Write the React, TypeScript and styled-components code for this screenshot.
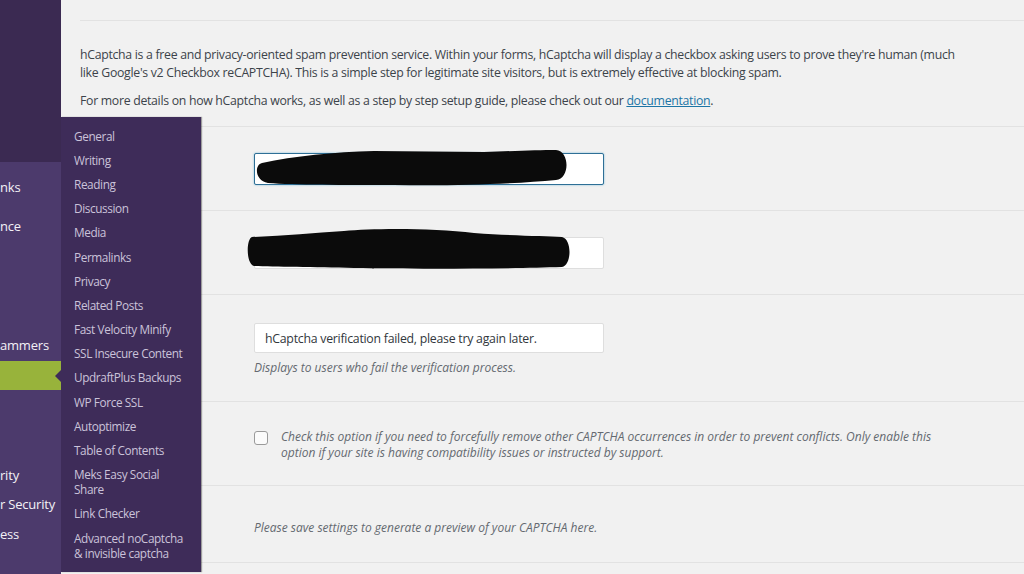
import styled, { createGlobalStyle } from "styled-components";

const GlobalStyle = createGlobalStyle`
  body {
    margin: 0;
    background: #f1f1f1;
    font-family: "Open Sans", "Noto Sans", sans-serif;
    color: #3c434a;
  }
`;

const Page = styled.div`
  position: relative;
  display: flex;
  height: 574px;
  overflow: hidden;
`;

const AdminMenu = styled.nav`
  width: 61px;
  flex-shrink: 0;
  display: flex;
  flex-direction: column;
  overflow: hidden;
`;

const MenuTop = styled.div`
  height: 162px;
  background: #3b2a52;
`;

const MenuBody = styled.div`
  flex: 1;
  background: #4c3a6c;
  display: flex;
  flex-direction: column;
`;

const MenuItem = styled.div<{ $gap: number; $h: number; $current?: boolean }>`
  margin-top: ${(p) => p.$gap}px;
  height: ${(p) => p.$h}px;
  display: flex;
  align-items: center;
  position: relative;
  white-space: nowrap;
  font-size: 13px;
  letter-spacing: -0.2px;
  color: #f3f1f6;
  background: ${(p) => (p.$current ? "#98b33b" : "transparent")};
`;

const Notch = styled.span`
  position: absolute;
  right: 0;
  top: 50%;
  margin-top: -6px;
  border-style: solid;
  border-width: 6px 6px 6px 0;
  border-color: transparent #3e2c59 transparent transparent;
`;

const Flyout = styled.ul`
  position: absolute;
  left: 61px;
  top: 117px;
  width: 140px;
  margin: 0;
  padding: 7px 0 7px;
  list-style: none;
  background: #3e2c59;
  box-shadow: 1px 0 1px rgba(0, 0, 0, 0.35);
`;

const FlyoutItem = styled.li`
  padding: 4.6px 14px 4.6px 13px;
  font-size: 11.8px;
  letter-spacing: -0.4px;
  line-height: 15px;
  color: #cbc3da;
`;

const Content = styled.main`
  flex: 1;
  padding-left: 19px;
`;

const Intro = styled.section`
  margin-top: 20px;
  border-top: 1px solid #e2e2e2;
  border-bottom: 1px solid #e2e2e2;
  padding: 25px 60px 16px 0;
`;

const Para = styled.p<{ $space?: number }>`
  margin: ${(p) => p.$space ?? 0}px 0 0;
  font-size: 12.3px;
  letter-spacing: -0.3px;
  line-height: 18px;
`;

const DocLink = styled.a`
  color: #1c75a6;
  text-decoration: underline;
`;

const FormRow = styled.div<{ $pad: string }>`
  padding: ${(p) => p.$pad};
  padding-left: 174px;
  border-bottom: 1px solid #e2e2e2;
`;

const FieldWrap = styled.div`
  position: relative;
  width: 350px;
`;

const TextInput = styled.input<{ $focused?: boolean; $h: number }>`
  display: block;
  box-sizing: border-box;
  width: 350px;
  height: ${(p) => p.$h}px;
  padding: 0 10px;
  margin: 0;
  font-family: inherit;
  font-size: 12.3px;
  letter-spacing: -0.25px;
  color: #32373c;
  background: #fff;
  border-radius: 2px;
  border: 1px solid ${(p) => (p.$focused ? "#2e6f96" : "#dedede")};
  box-shadow: ${(p) => (p.$focused ? "0 0 2px rgba(30, 140, 190, 0.6)" : "none")};
  outline: none;
`;

const Redaction = styled.svg`
  position: absolute;
  left: 0;
  top: 0;
  overflow: visible;
`;

const Description = styled.p`
  margin: 6px 0 0;
  font-size: 12px;
  font-style: italic;
  line-height: 18px;
  color: #646970;
`;

const CheckLine = styled.label`
  display: flex;
  align-items: flex-start;
  gap: 13px;
  padding-right: 85px;
`;

const Checkbox = styled.span`
  flex-shrink: 0;
  width: 14px;
  height: 14px;
  margin-top: 2px;
  box-sizing: border-box;
  border: 1px solid #9a9a9a;
  border-radius: 3px;
  background: #fbfbfb;
`;

const CheckText = styled.span`
  font-size: 12px;
  font-style: italic;
  line-height: 15.5px;
  color: #646970;
`;

const Note = styled.p`
  margin: 0;
  font-size: 12px;
  font-style: italic;
  line-height: 18px;
  color: #646970;
`;

const menuItems = [
  { label: "nks", gap: 10, h: 30 },
  { label: "nce", gap: 9, h: 30 },
  { label: "ammers", gap: 89, h: 30 },
  { label: "", gap: 1, h: 29, current: true },
  { label: "rity", gap: 70, h: 29 },
  { label: "r Security", gap: 0, h: 29 },
  { label: "ess", gap: 1, h: 29 },
];

const settingsPages = [
  "General",
  "Writing",
  "Reading",
  "Discussion",
  "Media",
  "Permalinks",
  "Privacy",
  "Related Posts",
  "Fast Velocity Minify",
  "SSL Insecure Content",
  "UpdraftPlus Backups",
  "WP Force SSL",
  "Autoptimize",
  "Table of Contents",
  "Meks Easy Social Share",
  "Link Checker",
  "Advanced noCaptcha & invisible captcha",
];

const App = () => {
  return (
    <Page>
      <GlobalStyle />
      <AdminMenu>
        <MenuTop />
        <MenuBody>
          {menuItems.map((m, i) => (
            <MenuItem key={i} $gap={m.gap} $h={m.h} $current={m.current}>
              {m.label}
              {m.current && <Notch />}
            </MenuItem>
          ))}
        </MenuBody>
      </AdminMenu>

      <Content>
        <Intro>
          <Para>
            hCaptcha is a free and privacy-oriented spam prevention service. Within your forms, hCaptcha will
            display a checkbox asking users to prove they're human (much like Google's v2 Checkbox reCAPTCHA).
            This is a simple step for legitimate site visitors, but is extremely effective at blocking spam.
          </Para>
          <Para $space={10}>
            For more details on how hCaptcha works, as well as a step by step setup guide, please check out our{" "}
            <DocLink href="#">documentation</DocLink>.
          </Para>
        </Intro>

        <FormRow $pad="26px 0 25px">
          <FieldWrap>
            <TextInput $focused $h={32} readOnly defaultValue="" />
            <Redaction width="350" height="32">
              <path
                d="M8 10 C40 3 80 -1 120 -2 L230 -1 C260 -2 285 -3 302 -3 C316 -2 316 26 302 27 C260 31 200 33 140 32 C90 32 40 32 14 30 C1 28 0 12 8 10 Z"
                fill="#0b0b0b"
              />
            </Redaction>
          </FieldWrap>
        </FormRow>

        <FormRow $pad="26px 0 25px">
          <FieldWrap>
            <TextInput $h={32} readOnly defaultValue="" />
            <Redaction width="350" height="32">
              <path
                d="M-2 0 C30 -1 60 -4 90 -6 C120 -9 180 -9 220 -4 C260 -1 290 -1 308 0 C318 2 318 28 308 30 C250 32 150 32 100 31 C60 30 20 30 0 29 C-8 27 -8 2 -2 0 Z"
                fill="#0b0b0b"
              />
            </Redaction>
          </FieldWrap>
        </FormRow>

        <FormRow $pad="28px 0 24px">
          <TextInput $h={30} readOnly defaultValue="hCaptcha verification failed, please try again later." />
          <Description>Displays to users who fail the verification process.</Description>
        </FormRow>

        <FormRow $pad="27px 0 25px">
          <CheckLine>
            <Checkbox />
            <CheckText>
              Check this option if you need to forcefully remove other CAPTCHA occurrences in order to prevent
              conflicts. Only enable this option if your site is having compatibility issues or instructed by
              support.
            </CheckText>
          </CheckLine>
        </FormRow>

        <FormRow $pad="33px 0 25px">
          <Note>Please save settings to generate a preview of your CAPTCHA here.</Note>
        </FormRow>
      </Content>

      <Flyout>
        {settingsPages.map((p) => (
          <FlyoutItem key={p}>{p}</FlyoutItem>
        ))}
      </Flyout>
    </Page>
  );
};

export default App;
